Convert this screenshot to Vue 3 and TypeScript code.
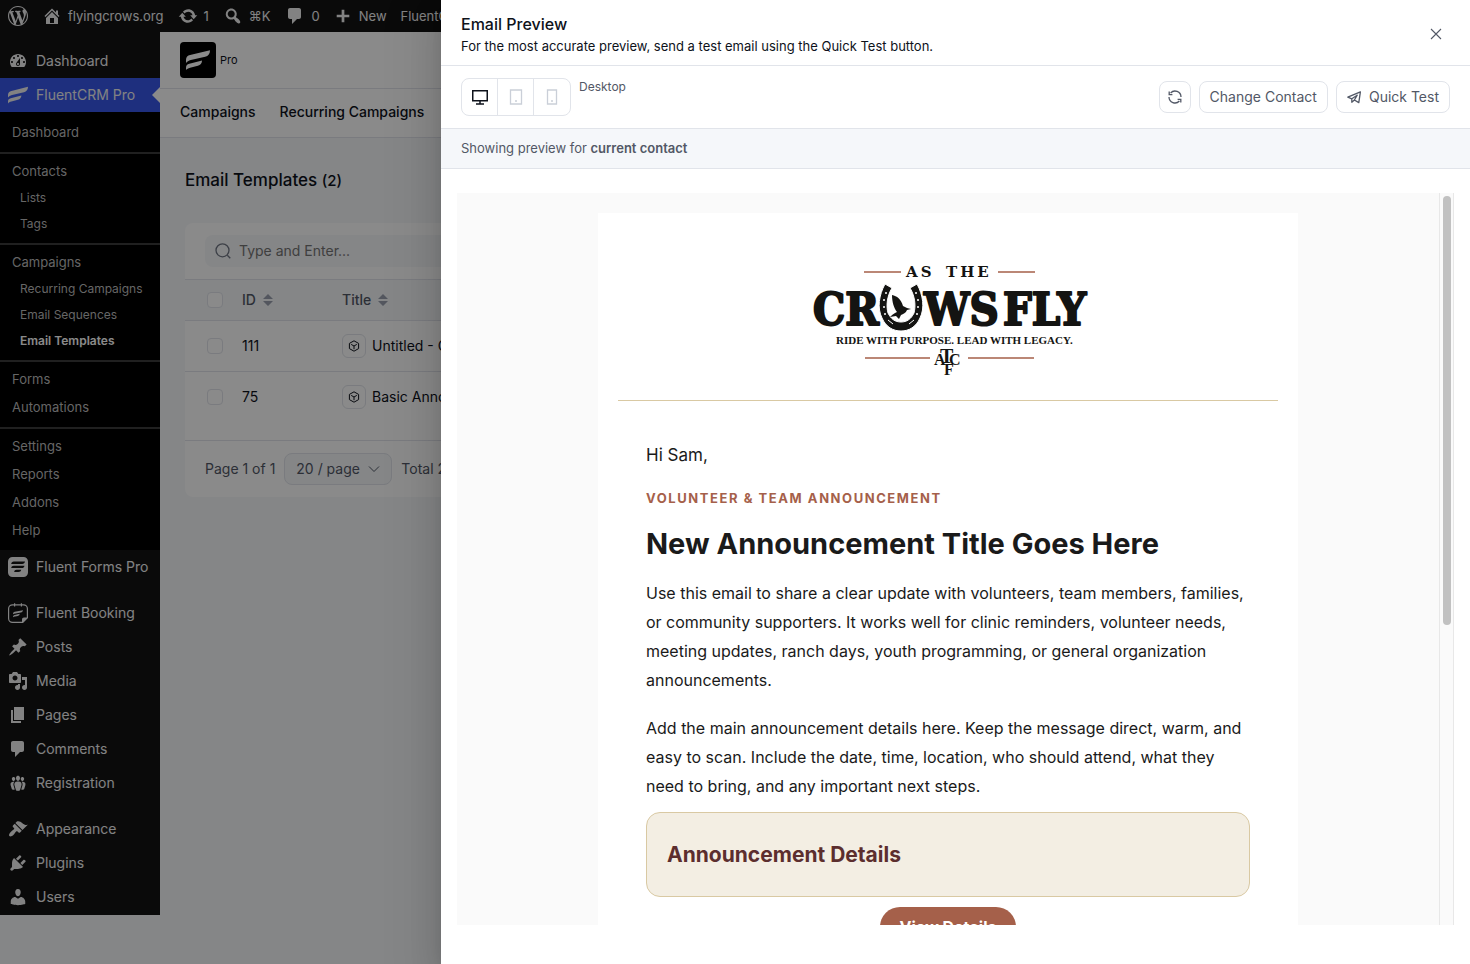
<script setup lang="ts">
import { ref } from 'vue'

type MenuItem = { label: string; icon: string; gapBefore?: boolean }
type SubItem = { label: string; level: 1 | 2; current?: boolean }

const icons: Record<string, string> = {
  wordpress:
    'M20 10c0-5.51-4.49-10-10-10C4.48 0 0 4.49 0 10c0 5.52 4.48 10 10 10 5.51 0 10-4.48 10-10zM7.78 15.37L4.37 6.22c.55-.02 1.17-.08 1.17-.08.5-.06.44-1.13-.06-1.11 0 0-1.45.11-2.37.11-.18 0-.37 0-.58-.01C4.12 2.69 6.87 1.11 10 1.11c2.33 0 4.45.87 6.05 2.34-.68-.11-1.65.39-1.65 1.58 0 .74.45 1.36.9 2.1.35.61.55 1.36.55 2.46 0 1.49-1.4 5-1.4 5l-3.03-8.37c.54-.02.82-.17.82-.17.5-.05.44-1.25-.06-1.22 0 0-1.44.12-2.38.12-.87 0-2.33-.12-2.33-.12-.5-.03-.56 1.2-.06 1.22l.92.08 1.26 3.41zM17.41 10c.24-.64.74-1.87.43-4.25.7 1.29 1.05 2.71 1.05 4.25 0 3.29-1.73 6.24-4.4 7.78.97-2.59 1.94-5.2 2.92-7.78zM6.1 18.09C3.12 16.65 1.11 13.53 1.11 10c0-1.3.23-2.48.72-3.59C3.25 10.3 4.67 14.2 6.1 18.09zm4.03-6.63l2.58 6.98c-.86.29-1.76.45-2.71.45-.79 0-1.57-.11-2.29-.33.81-2.38 1.62-4.74 2.42-7.1z',
  home: 'M16 8.5l1.53 1.53-1.06 1.06L10 4.6l-6.47 6.49-1.06-1.06L10 2.5l4 4v-2h2v4zm-6-2.46l6 5.99V18H4v-5.97zM12 17v-5H8v5h4z',
  update:
    'M10.2 3.28c3.53 0 6.43 2.61 6.92 6h2.08l-3.5 4-3.5-4h2.32c-.45-1.97-2.21-3.45-4.32-3.45-1.45 0-2.73.71-3.54 1.78L4.95 5.66C6.23 4.2 8.11 3.28 10.2 3.28zm-.4 13.44c-3.52 0-6.43-2.61-6.92-6H.8l3.5-4c1.17 1.33 2.33 2.67 3.5 4H5.48c.45 1.97 2.21 3.45 4.32 3.45 1.45 0 2.73-.71 3.54-1.78l1.71 1.95c-1.28 1.46-3.15 2.38-5.25 2.38z',
  search:
    'M12.14 4.18c1.87 1.87 2.11 4.75.72 6.89.12.1.22.21.36.31.2.16.47.36.81.59.34.24.56.39.66.47.42.31.73.57.94.78.32.32.6.65.84 1 .25.35.44.69.59 1.04.14.35.21.68.18 1-.02.32-.14.59-.36.81s-.49.34-.81.36c-.31.02-.65-.04-.99-.19-.35-.14-.7-.34-1.04-.59-.35-.24-.68-.52-1-.84-.21-.21-.47-.52-.77-.93-.1-.13-.25-.35-.47-.66-.22-.32-.4-.57-.56-.78-.16-.2-.29-.35-.44-.5-2.07 1.09-4.69.76-6.44-.98-2.14-2.15-2.14-5.64 0-7.78 2.15-2.15 5.63-2.15 7.78 0zm-1.41 6.36c1.36-1.37 1.36-3.58 0-4.95-1.37-1.37-3.59-1.37-4.95 0-1.37 1.37-1.37 3.58 0 4.95 1.36 1.37 3.58 1.37 4.95 0z',
  plus: 'M17 8.5v3h-5.5V17h-3v-5.5H3v-3h5.5V3h3v5.5z',
  dashboard:
    'M3.76 16h12.48c1.1-1.37 1.76-3.11 1.76-5 0-4.42-3.58-8-8-8s-8 3.58-8 8c0 1.89.66 3.63 1.76 5zM10 4c.55 0 1 .45 1 1s-.45 1-1 1-1-.45-1-1 .45-1 1-1zM6 6c.55 0 1 .45 1 1s-.45 1-1 1-1-.45-1-1 .45-1 1-1zm8 0c.55 0 1 .45 1 1s-.45 1-1 1-1-.45-1-1 .45-1 1-1zm-5.37 5.55L12 7v6c0 1.1-.9 2-2 2s-2-.9-2-2c0-.57.24-1.08.63-1.45zM4 10c.55 0 1 .45 1 1s-.45 1-1 1-1-.45-1-1 .45-1 1-1zm12 0c.55 0 1 .45 1 1s-.45 1-1 1-1-.45-1-1 .45-1 1-1zm-5 3c0-.55-.45-1-1-1s-1 .45-1 1 .45 1 1 1 1-.45 1-1z',
  fluent:
    'M0 12.6V9.8C0 7.6 1.4 6.4 3.4 5.9L20 1.8c0 3-1.4 4.8-4 5.4L4 10.1c-1.9.5-3 1.2-4 2.5zM0 18.4v-2c0-1.8 1-2.8 2.8-3.2l10.6-2.7c-.2 2.4-1.3 3.7-3.5 4.3l-6.5 1.6c-1.6.4-2.6 1-3.4 2z',
  forms:
    'M4.5 0h11A4.5 4.5 0 0 1 20 4.5v11a4.5 4.5 0 0 1-4.5 4.5h-11A4.5 4.5 0 0 1 0 15.5v-11A4.5 4.5 0 0 1 4.5 0zM17 4.5H5.8C4.2 4.5 3.4 5.4 3.2 7h11c1.6 0 2.5-.9 2.8-2.5zM16.5 8.7H5.8c-1.5 0-2.3.8-2.6 2.3h10.5c1.6 0 2.5-.8 2.8-2.3zM13.2 12.8H8.5c-1.4 0-2.1.8-2.3 2.2h4.2c1.6 0 2.5-.7 2.8-2.2z',
  booking:
    'M4.5 1.3H6V.3h1.2v1h5.6V.3H14v1h1.5A4.5 4.5 0 0 1 20 5.8V15l-5 5H4.5A4.5 4.5 0 0 1 0 15.5V5.8a4.5 4.5 0 0 1 4.5-4.5zm0 1.2A3.3 3.3 0 0 0 1.2 5.8v9.7a3.3 3.3 0 0 0 3.3 3.3H14v-2.3c0-1.2.8-2 2-2h2.8V5.8a3.3 3.3 0 0 0-3.3-3.3H14v1h-1.2v-1H7.2v1H6v-1zM5 11.3c0-1.5.6-2.2 1.8-2.5L15 7.2c-.2 1.3-.9 2-2.2 2.3l-5.3 1.1c-1.1.2-1.9.4-2.5.7zM5 14.2c0-1.3.6-1.9 1.7-2.2l5-1.2c-.1 1.2-.7 1.8-1.8 2.1l-2.9.7c-.9.2-1.5.3-2 .6z',
  posts:
    'M10.44 3.02l1.82-1.82 6.36 6.35-1.83 1.82c-1.05-.68-2.48-.57-3.41.36l-.75.75c-.92.93-1.04 2.35-.35 3.41l-1.83 1.82-2.41-2.41-2.8 2.79c-.42.42-3.38 2.71-3.8 2.29s1.86-3.39 2.28-3.81l2.79-2.79L4.1 9.36l1.83-1.82c1.05.69 2.48.57 3.4-.36l.75-.75c.93-.92 1.05-2.35.36-3.41z',
  media:
    'M13 11V4c0-.55-.45-1-1-1h-1.67L9 1H5L3.67 3H2c-.55 0-1 .45-1 1v7c0 .55.45 1 1 1h10c.55 0 1-.45 1-1zM7 4.5c1.38 0 2.5 1.12 2.5 2.5S8.38 9.5 7 9.5 4.5 8.38 4.5 7 5.62 4.5 7 4.5zM14 6h5v10.5c0 1.38-1.12 2.5-2.5 2.5S14 17.88 14 16.5s1.12-2.5 2.5-2.5c.17 0 .34.02.5.05V9h-3V6zm-4 8.05V13h2v3.5c0 1.38-1.12 2.5-2.5 2.5S7 17.88 7 16.5 8.12 14 9.5 14c.17 0 .34.02.5.05z',
  pages: 'M6 15V2h10v13H6zm-1 1h8v2H3V5h2v11z',
  comments: 'M5 2h9c1.1 0 2 .9 2 2v7c0 1.1-.9 2-2 2h-2l-5 5v-5H5c-1.1 0-2-.9-2-2V4c0-1.1.9-2 2-2z',
  groups:
    'M8.03 4.46c-.29 1.28.55 3.46 1.97 3.46 1.41 0 2.25-2.18 1.96-3.46-.22-.98-1.08-1.63-1.96-1.63-.89 0-1.74.65-1.97 1.63zm-4.13.9c-.25 1.08.47 2.93 1.67 2.93s1.92-1.85 1.67-2.93c-.19-.83-.92-1.39-1.67-1.39s-1.48.56-1.67 1.39zm8.86 0c-.25 1.08.47 2.93 1.66 2.93 1.2 0 1.92-1.85 1.67-2.93-.19-.83-.92-1.39-1.67-1.39-.74 0-1.47.56-1.66 1.39zm-.59 11.43l1.25-4.3C14.2 10 12.71 8.47 10 8.47c-2.72 0-4.21 1.53-3.44 4.02l1.26 4.3C8.05 17.51 9 18 10 18c.98 0 1.94-.49 2.17-1.21zm-6.1-7.63c-.49.67-.96 1.83-.42 3.59l1.12 3.79c-.34.2-.77.31-1.2.31-.85 0-1.65-.41-1.85-1.03l-1.07-3.65c-.65-2.11.61-3.4 2.92-3.4.27 0 .54.02.79.06-.1.1-.2.22-.29.33zm8.35-.39c2.31 0 3.58 1.29 2.92 3.4l-1.07 3.65c-.2.62-1 1.03-1.85 1.03-.43 0-.86-.11-1.2-.31l1.11-3.77c.55-1.78.08-2.94-.42-3.61-.08-.11-.18-.23-.28-.33.25-.04.51-.06.79-.06z',
  appearance:
    'M14.48 11.06L7.41 3.99l1.5-1.5c.5-.56 2.3-.47 3.51.32 1.21.8 1.43 1.28 2.91 2.1 1.18.64 2.45 1.26 4.45.85zm-.71.71L6.7 4.7 4.93 6.47c-.39.39-.39 1.02 0 1.41l1.06 1.06c.39.39.39 1.03 0 1.42-.6.6-1.43 1.11-2.21 1.69-.35.26-.7.53-1.01.84C1.43 14.23.4 16.08 1.4 17.07c.99 1 2.84-.03 4.18-1.36.31-.31.58-.66.85-1.02.57-.78 1.08-1.61 1.69-2.21.39-.39 1.02-.39 1.41 0l1.06 1.06c.39.39 1.02.39 1.41 0z',
  plugins:
    'M13.11 4.36L9.87 7.6 8 5.73l3.24-3.24c.35-.34 1.05-.2 1.56.32.52.51.66 1.21.31 1.55zm-8 1.77l.91-1.12 9.01 9.01-1.19.84c-.71.71-2.63 1.16-3.82 1.16H6.14L4.9 17.26c-.59.59-1.54.59-2.12 0-.59-.58-.59-1.53 0-2.12l1.24-1.24v-3.88c0-1.13.4-3.19 1.09-3.89zm7.26 3.97l3.24-3.24c.34-.35 1.04-.21 1.55.31.52.51.66 1.21.31 1.55l-3.24 3.25z',
  users:
    'M10 9.25c-2.27 0-2.73-3.44-2.73-3.44C7 4.02 7.82 2 9.97 2c2.16 0 2.98 2.02 2.71 3.81 0 0-.41 3.44-2.68 3.44zm0 2.57L12.72 10c2.39 0 4.52 2.33 4.52 4.53v2.49s-3.65 1.13-7.24 1.13c-3.65 0-7.24-1.13-7.24-1.13v-2.49c0-2.25 1.94-4.48 4.47-4.48z',
}

const barItems = [
  { icon: 'home', label: 'flyingcrows.org' },
  { icon: 'update', label: '1' },
  { icon: 'search', label: '⌘K' },
  { icon: 'comments', label: '0' },
  { icon: 'plus', label: 'New' },
]

const subGroups: SubItem[][] = [
  [{ label: 'Dashboard', level: 1 }],
  [
    { label: 'Contacts', level: 1 },
    { label: 'Lists', level: 2 },
    { label: 'Tags', level: 2 },
  ],
  [
    { label: 'Campaigns', level: 1 },
    { label: 'Recurring Campaigns', level: 2 },
    { label: 'Email Sequences', level: 2 },
    { label: 'Email Templates', level: 2, current: true },
  ],
  [
    { label: 'Forms', level: 1 },
    { label: 'Automations', level: 1 },
  ],
  [
    { label: 'Settings', level: 1 },
    { label: 'Reports', level: 1 },
    { label: 'Addons', level: 1 },
    { label: 'Help', level: 1 },
  ],
]

const menu: MenuItem[] = [
  { label: 'Fluent Forms Pro', icon: 'forms' },
  { label: 'Fluent Booking', icon: 'booking', gapBefore: true },
  { label: 'Posts', icon: 'posts' },
  { label: 'Media', icon: 'media' },
  { label: 'Pages', icon: 'pages' },
  { label: 'Comments', icon: 'comments' },
  { label: 'Registration', icon: 'groups' },
  { label: 'Appearance', icon: 'appearance', gapBefore: true },
  { label: 'Plugins', icon: 'plugins' },
  { label: 'Users', icon: 'users' },
]

const templates = [
  { id: 111, title: 'Untitled - Copy' },
  { id: 75, title: 'Basic Announcement' },
]

const query = ref('')
const perPage = ref('20')
const device = ref('Desktop')
</script>

<template>
  <div class="page">
    <header class="bar">
      <a href="#" class="bar-link" aria-label="About WordPress">
        <svg class="ico" viewBox="0 0 20 20"><path :d="icons.wordpress" /></svg>
      </a>
      <a v-for="b in barItems" :key="b.icon" href="#" class="bar-link" :class="b.icon">
        <svg class="ico" viewBox="0 0 20 20"><path :d="icons[b.icon]" /></svg>
        <span>{{ b.label }}</span>
      </a>
      <a href="#" class="bar-link">FluentCRM</a>
    </header>

    <div class="body">
      <nav class="side" aria-label="Admin menu">
        <a href="#" class="item">
          <svg class="ico" viewBox="0 0 20 20"><path fill-rule="evenodd" :d="icons.dashboard" /></svg>
          Dashboard
        </a>
        <a href="#" class="item active">
          <svg class="ico" viewBox="0 0 20 20"><path :d="icons.fluent" /></svg>
          FluentCRM Pro
        </a>
        <div class="sub">
          <div v-for="(g, i) in subGroups" :key="i" class="group">
            <a
              v-for="s in g"
              :key="s.label"
              href="#"
              :class="['sub-item', { nested: s.level === 2, current: s.current }]"
              >{{ s.label }}</a
            >
          </div>
        </div>
        <a v-for="m in menu" :key="m.label" href="#" :class="['item', { gap: m.gapBefore }]">
          <svg class="ico" viewBox="0 0 20 20"><path fill-rule="evenodd" :d="icons[m.icon]" /></svg>
          {{ m.label }}
        </a>
      </nav>

      <main class="main">
        <div class="brand">
          <span class="brand-mark">
            <svg viewBox="0 0 20 20"><path :d="icons.fluent" /></svg>
          </span>
          <span>Pro</span>
        </div>
        <nav class="tabs" aria-label="Email sections">
          <a href="#">Campaigns</a>
          <a href="#">Recurring Campaigns</a>
        </nav>
        <h1 class="title">Email Templates <small>(2)</small></h1>
        <section class="card">
          <div class="search-row">
            <label class="search-box">
              <svg viewBox="0 0 16 16" fill="none" stroke="currentColor" stroke-width="1.3">
                <circle cx="7.5" cy="7.3" r="6.5" />
                <path d="M12.3 12.2l3 3" />
              </svg>
              <input v-model="query" type="search" placeholder="Type and Enter..." aria-label="Search templates" />
            </label>
          </div>
          <table>
            <thead>
              <tr>
                <th class="c-check"><input type="checkbox" aria-label="Select all" /></th>
                <th class="c-id">
                  <span class="sort">ID<svg viewBox="0 0 10 12"><path d="M5 0l5 5H0zM5 12L0 7h10z" /></svg></span>
                </th>
                <th>
                  <span class="sort">Title<svg viewBox="0 0 10 12"><path d="M5 0l5 5H0zM5 12L0 7h10z" /></svg></span>
                </th>
              </tr>
            </thead>
            <tbody>
              <tr v-for="t in templates" :key="t.id">
                <td class="c-check"><input type="checkbox" :aria-label="`Select ${t.title}`" /></td>
                <td class="c-id">{{ t.id }}</td>
                <td>
                  <a href="#" class="tpl">
                    <span class="cube">
                      <svg viewBox="0 0 12 12" fill="none" stroke="currentColor">
                        <path d="M6 .8l4.6 2.6v5.200L6 11.200 1.400 8.600V3.400z" />
                        <path d="M3.200 4.400L6 6l2.800-1.600M6 6v3.200" />
                      </svg>
                    </span>
                    {{ t.title }}
                  </a>
                </td>
              </tr>
            </tbody>
          </table>
          <footer class="pager">
            <span>Page 1 of 1</span>
            <span class="select">
              <select v-model="perPage" aria-label="Rows per page">
                <option value="20">20 / page</option>
                <option value="50">50 / page</option>
              </select>
              <svg viewBox="0 0 12 12" fill="none" stroke="currentColor"><path d="M1 3.500l5 5 5-5" /></svg>
            </span>
            <span>Total 2</span>
          </footer>
        </section>
      </main>
    </div>

    <div class="overlay"></div>

    <section class="drawer" role="dialog" aria-label="Email Preview">
      <header class="d-head">
        <div>
          <h2>Email Preview</h2>
          <p>For the most accurate preview, send a test email using the Quick Test button.</p>
        </div>
        <button type="button" class="close" aria-label="Close">
          <svg viewBox="0 0 12 12" fill="none" stroke="currentColor" stroke-width="1.1"><path d="M1 1l10 10M11 1L1 11" /></svg>
        </button>
      </header>

      <div class="tools">
        <div class="devices" role="group" aria-label="Preview size">
          <button type="button" aria-label="Desktop" class="on" @click="device = 'Desktop'">
            <svg viewBox="0 0 18 18" fill="none" stroke="currentColor" stroke-width="1.5">
              <path d="M1.750 2.750h14.500v10H1.750zM9 13v3M5 16h8" />
            </svg>
          </button>
          <button type="button" aria-label="Tablet" @click="device = 'Tablet'">
            <svg viewBox="0 0 18 18" fill="none" stroke="currentColor" stroke-width="1.3">
              <path d="M3.500 2h11v14h-11zM8 13h2" />
            </svg>
          </button>
          <button type="button" aria-label="Mobile" @click="device = 'Mobile'">
            <svg viewBox="0 0 18 18" fill="none" stroke="currentColor" stroke-width="1.3">
              <path d="M4.500 2h9v14h-9zM8 13h2" />
            </svg>
          </button>
        </div>
        <span class="device-name">{{ device }}</span>
        <div class="actions">
          <button type="button" class="btn square" aria-label="Refresh">
            <svg viewBox="0 0 14 14" fill="none" stroke="currentColor" stroke-width="1.3">
              <path d="M2.600 3A6 6 0 0 1 13 7M11.400 11A6 6 0 0 1 1 7" />
              <path d="M1.200 1.400v3.200h3.200M12.800 12.600V9.400H9.600" />
            </svg>
          </button>
          <button type="button" class="btn">Change Contact</button>
          <button type="button" class="btn">
            <svg viewBox="0 0 14 14" fill="none" stroke="currentColor" stroke-width="1.3" stroke-linejoin="round">
              <path d="M.8 7.200L13.400 1.800 11.800 12.600 7.400 10 4.800 12.200V8.800zM4.800 8.800l5.400-3.600-2.800 4.800" />
            </svg>
            Quick Test
          </button>
        </div>
      </div>

      <p class="notice">Showing preview for <strong>current contact</strong></p>

      <div class="frame">
        <div class="canvas">
          <article class="mail">
            <div class="mail-top">
              <svg class="logo" viewBox="0 0 268 112" role="img" aria-label="As the Crows Fly">
                <path d="M50 8h37M184 8h37M51 94h65M154 94h66" stroke="#a5604a" stroke-width="1.4" />
                <g fill="#141412">
                  <text class="slab" x="92" y="13" font-size="15">AS</text>
                  <text class="slab" x="132" y="13" font-size="15">THE</text>
                  <g class="block" font-size="45" stroke="#141412" stroke-width="2" stroke-linejoin="round">
                    <text x="-1" y="61">CR</text>
                    <text x="110" y="61">WS</text>
                    <text x="189" y="61">FLY</text>
                  </g>
                  <text class="tag" x="22" y="80" font-size="11">RIDE WITH PURPOSE. LEAD WITH LEGACY.</text>
                  <text class="mono" x="120" y="101" font-size="16">A</text>
                  <text class="mono" x="135" y="101" font-size="16">C</text>
                  <text class="mono" x="126" y="99" font-size="20">T</text>
                  <text class="mono" x="130" y="111" font-size="16">F</text>
                  <path
                    d="M71 20l7 4c-5 8-6 18-4 25 3 6 7 9 13 9s10-3 13-9c2-7 1-17-4-25l7-4c6 11 8 24 3 34-4 9-11 13-19 13s-15-4-19-13c-5-10-3-23 3-34z"
                    stroke="#fff"
                  />
                  <path d="M78 31c5 1 9 4 11 11l4 2 4 1-4 1c-1 3-4 4-6 5l-2 4-3-3-6 1c3-3 5-4 7-5-3-4-5-10-5-17z" />
                </g>
                <g fill="#fff">
                  <circle cx="72" cy="29" r="1" />
                  <circle cx="70" cy="36" r="1" />
                  <circle cx="70" cy="43" r="1" />
                  <circle cx="71" cy="50" r="1" />
                  <circle cx="102" cy="29" r="1" />
                  <circle cx="104" cy="36" r="1" />
                  <circle cx="104" cy="43" r="1" />
                  <circle cx="103" cy="50" r="1" />
                </g>
                <path d="M74 56l5 4M100 56l-5 4" stroke="#fff" />
              </svg>
            </div>
            <div class="mail-body">
              <p class="hello">Hi Sam,</p>
              <p class="eyebrow">VOLUNTEER &amp; TEAM ANNOUNCEMENT</p>
              <h3>New Announcement Title Goes Here</h3>
              <p>
                Use this email to share a clear update with volunteers, team members, families, or community
                supporters. It works well for clinic reminders, volunteer needs, meeting updates, ranch days, youth
                programming, or general organization announcements.
              </p>
              <p>
                Add the main announcement details here. Keep the message direct, warm, and easy to scan. Include the
                date, time, location, who should attend, what they need to bring, and any important next steps.
              </p>
              <div class="details"><h4>Announcement Details</h4></div>
              <a href="#" class="cta">View Details</a>
            </div>
          </article>
        </div>
        <div class="track"><div class="thumb"></div></div>
      </div>
    </section>
  </div>
</template>

<style>
body {
  margin: 0;
}
</style>

<style scoped>
* {
  box-sizing: border-box;
}
.page {
  position: relative;
  height: 100vh;
  overflow: hidden;
  background: #f5f7fa;
  color: #0e121b;
  font: 14px/20px Inter, 'Liberation Sans', sans-serif;
}
a {
  color: inherit;
  text-decoration: none;
}
h1,
h2,
h3,
h4,
p {
  margin: 0;
}
button,
input,
select {
  font: inherit;
  color: inherit;
}
svg {
  flex: none;
  display: block;
}
.ico {
  width: 20px;
  height: 20px;
  fill: currentColor;
}
.bar {
  display: flex;
  align-items: center;
  gap: 14px;
  height: 32px;
  padding-left: 8px;
  background: #141414;
  color: #f0f0f1;
  font-size: 13px;
  white-space: nowrap;
}
.bar-link {
  display: flex;
  align-items: center;
  gap: 6px;
}
.bar-link.comments,
.bar-link.plus {
  gap: 7px;
}
.bar-link.plus .ico {
  width: 18px;
  height: 18px;
}
.body {
  display: flex;
  align-items: flex-start;
}
.side {
  width: 160px;
  flex: none;
  padding: 12px 0 1px;
  background: #141414;
  color: #f0f0f1;
}
.item {
  position: relative;
  display: flex;
  align-items: center;
  gap: 8px;
  height: 34px;
  padding-left: 8px;
  white-space: nowrap;
}
.item.gap {
  margin-top: 12px;
}
.item.active {
  background: #3858e9;
}
.item.active::after {
  content: '';
  position: absolute;
  right: 0;
  top: 9px;
  border: 8px solid transparent;
  border-left: 0;
  border-right-color: #fff;
}
.sub {
  padding: 6px 0;
  background: #000;
  color: #bcbcbc;
  font-size: 13px;
}
.group + .group {
  margin-top: 6px;
  padding-top: 3px;
  border-top: 2px solid #3c3c3c;
}
.sub-item {
  display: block;
  padding-left: 12px;
  line-height: 28px;
  white-space: nowrap;
}
.sub-item.nested {
  padding-left: 20px;
  font-size: 12px;
  line-height: 26px;
}
.sub-item.current {
  color: #fff;
  font-weight: 600;
}
.main {
  flex: 1;
  min-width: 0;
}
.brand {
  display: flex;
  align-items: center;
  gap: 4px;
  height: 57px;
  padding-left: 20px;
  background: #fff;
  border-bottom: 1px solid #e1e4ea;
  font-size: 11px;
}
.brand-mark {
  display: grid;
  place-items: center;
  width: 36px;
  height: 36px;
  border-radius: 4px;
  background: #000;
}
.brand-mark svg {
  width: 24px;
  height: 24px;
  fill: #fff;
}
.tabs {
  display: flex;
  align-items: center;
  gap: 24px;
  height: 49px;
  padding: 0 0 2px 20px;
  background: #fff;
  border-bottom: 1px solid #e1e4ea;
  font-weight: 500;
}
.title {
  margin: 30px 25px;
  font-size: 17px;
  line-height: 24px;
  font-weight: 500;
}
.title small {
  font-size: 15px;
}
.card {
  margin: 0 25px;
  border-radius: 8px;
  background: #fff;
  overflow: hidden;
}
.search-row {
  padding: 12px 20px;
  border-bottom: 1px solid #e1e4ea;
}
.search-box {
  display: flex;
  align-items: center;
  gap: 8px;
  height: 32px;
  padding: 0 10px;
  border-radius: 8px;
  background: #f5f7fa;
  color: #717784;
}
.search-box svg {
  width: 16px;
  height: 16px;
}
.search-box input {
  flex: 1;
  padding: 0;
  border: 0;
  background: none;
  outline: 0;
}
.search-box input::placeholder {
  color: #757575;
}
table {
  width: 100%;
  border-collapse: collapse;
  text-align: left;
}
th {
  height: 40px;
  padding: 0;
  background: #f5f7fa;
  color: #525866;
  font-weight: 500;
}
td {
  height: 51px;
  padding: 0;
}
tr {
  border-bottom: 1px solid #e1e4ea;
}
tbody tr:last-child {
  border: 0;
}
.c-check {
  width: 57px;
  padding-left: 22px;
}
.c-id {
  width: 100px;
}
input[type='checkbox'] {
  appearance: none;
  display: block;
  width: 16px;
  height: 16px;
  margin: 0;
  border: 1px solid #e1e4ea;
  border-radius: 4px;
  background: #fff;
}
.sort {
  display: flex;
  align-items: center;
  gap: 7px;
}
.sort svg {
  width: 10px;
  height: 12px;
  fill: #99a0ae;
}
.tpl {
  display: flex;
  align-items: center;
  gap: 6px;
}
.cube {
  display: grid;
  place-items: center;
  width: 24px;
  height: 24px;
  border: 1px solid #e1e4ea;
  border-radius: 6px;
}
.cube svg {
  width: 12px;
  height: 12px;
}
.pager {
  display: flex;
  align-items: center;
  gap: 9px;
  height: 57px;
  margin-top: 18px;
  padding-left: 20px;
  border-top: 1px solid #e1e4ea;
  color: #525866;
}
.select {
  display: grid;
  align-items: center;
}
.select select,
.select svg {
  grid-area: 1 / 1;
}
.select select {
  appearance: none;
  width: 108px;
  height: 32px;
  padding: 0 11px;
  border: 1px solid #e1e4ea;
  border-radius: 8px;
  background: #f5f7fa;
}
.select svg {
  justify-self: end;
  width: 12px;
  height: 12px;
  margin-right: 12px;
  pointer-events: none;
}
.overlay {
  position: absolute;
  inset: 0;
  background: rgba(0, 0, 0, 0.46);
}
.drawer {
  position: absolute;
  top: 0;
  right: 0;
  bottom: 0;
  width: 70%;
  display: flex;
  flex-direction: column;
  background: #fff;
  box-shadow:
    0 16px 48px 16px rgba(0, 0, 0, 0.08),
    0 12px 32px rgba(0, 0, 0, 0.12),
    0 8px 16px -8px rgba(0, 0, 0, 0.16);
}
.d-head {
  display: flex;
  align-items: center;
  justify-content: space-between;
  height: 66px;
  padding: 2px 20px 0;
  border-bottom: 1px solid #e1e4ea;
}
.d-head h2 {
  font-size: 16px;
  line-height: 24px;
  font-weight: 500;
}
.d-head p {
  font-size: 13px;
  line-height: 20px;
}
.close {
  display: grid;
  place-items: center;
  width: 28px;
  height: 28px;
  padding: 0;
  border: 0;
  background: none;
  color: #525866;
}
.close svg {
  width: 12px;
  height: 12px;
}
.tools {
  display: flex;
  gap: 8px;
  height: 63px;
  padding: 12px 20px;
  border-bottom: 1px solid #e1e4ea;
  color: #525866;
}
.devices {
  display: flex;
  height: 38px;
  border: 1px solid #e1e4ea;
  border-radius: 8px;
}
.devices button {
  display: grid;
  place-items: center;
  width: 36px;
  padding: 0;
  border: 0;
  background: none;
  color: #cacfd8;
}
.devices button:not(:last-child) {
  border-right: 1px solid #e1e4ea;
}
.devices button.on {
  color: #0e121b;
}
.devices svg {
  width: 18px;
  height: 18px;
}
.device-name {
  font-size: 12px;
  line-height: 18px;
}
.actions {
  display: flex;
  align-items: center;
  gap: 8px;
  margin-left: auto;
}
.btn {
  display: flex;
  align-items: center;
  justify-content: center;
  gap: 8px;
  height: 32px;
  padding: 0 10px;
  border: 1px solid #e1e4ea;
  border-radius: 8px;
  background: #fff;
}
.btn.square {
  width: 32px;
  padding: 0;
}
.btn svg {
  width: 14px;
  height: 14px;
}
.notice {
  padding: 0 20px;
  border-bottom: 1px solid #e1e4ea;
  background: #f5f7fa;
  color: #525866;
  font-size: 13px;
  line-height: 39px;
}
.notice strong {
  font-weight: 600;
}
.frame {
  display: flex;
  flex: 1;
  min-height: 0;
  margin: 24px 16px 39px;
}
.canvas {
  flex: 1;
  padding: 20px;
  overflow: hidden;
  background: #fafafa;
}
.mail {
  max-width: 700px;
  margin: 0 auto;
  padding: 0 20px;
  background: #fff;
  color: #1a1a1a;
}
.mail-top {
  display: flex;
  justify-content: center;
  padding: 51px 0 24px;
  border-bottom: 1px solid #d9c9a3;
}
.logo {
  width: 268px;
  height: 112px;
  overflow: visible;
}
.slab {
  font-family: 'DejaVu Serif', serif;
  font-weight: 700;
  letter-spacing: 3px;
}
.block {
  font-family: 'DejaVu Serif Condensed', 'DejaVu Serif', serif;
  font-weight: 700;
}
.tag,
.mono {
  font-family: 'Liberation Serif', serif;
  font-weight: 700;
}
.mail-body {
  display: flex;
  flex-direction: column;
  padding: 40px 28px 48px;
  font-size: 16px;
  line-height: 29px;
}
.mail-body p {
  margin-bottom: 19px;
}
.mail-body .hello {
  margin-bottom: 18px;
  font-size: 17px;
}
.mail-body .eyebrow {
  margin-bottom: 17px;
  color: #a5604a;
  font-size: 13px;
  line-height: 20px;
  font-weight: 700;
  letter-spacing: 0.12em;
}
.mail-body h3 {
  margin-bottom: 16px;
  font-size: 29px;
  line-height: 38px;
  font-weight: 700;
}
.mail-body .details {
  margin: -8px 0 10px;
  padding: 20px;
  border: 1px solid #d9c9a3;
  border-radius: 14px;
  background: #f3eee3;
}
.details h4 {
  color: #5c2e2e;
  font-size: 21px;
  line-height: 43px;
  font-weight: 700;
}
.cta {
  align-self: center;
  padding: 10px 20px;
  border-radius: 999px;
  background: #a5604a;
  color: #fff;
  font-size: 16px;
  line-height: 20px;
  font-weight: 700;
}
.track {
  width: 15px;
  padding: 3px;
  border: solid #e8e8e8;
  border-width: 0 1px;
  background: #fafafa;
}
.thumb {
  height: 429px;
  width: 8px;
  border-radius: 4px;
  background: #c1c1c1;
}
</style>
